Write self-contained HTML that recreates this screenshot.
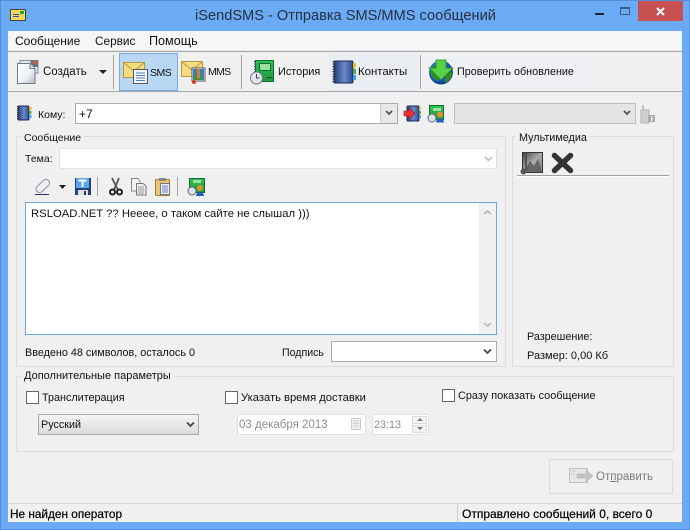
<!DOCTYPE html>
<html><head><meta charset="utf-8"><style>
*{box-sizing:border-box}
html,body{margin:0;padding:0;width:690px;height:530px;overflow:hidden}
body{position:relative;background:#6baaf5;font-family:"Liberation Sans",sans-serif;font-size:10.8px;color:#111}
.a{position:absolute}
.t{position:absolute;white-space:nowrap;line-height:14px}
.g{position:absolute;border:1px solid #dcdcdc}
.in{position:absolute;background:#fff;border:1px solid #e1e1e1}
.sep{position:absolute;width:1px;background:#a0a0a0}
svg{position:absolute;overflow:visible}
.chk{position:absolute;width:13px;height:13px;background:#fff;border:1px solid #666}
</style></head><body>
<svg style="left:0;top:0;width:0;height:0"><defs>
<linearGradient id="bk" x1="0" x2="1" y1="0" y2="0"><stop offset="0" stop-color="#24407e"/><stop offset=".55" stop-color="#6a88c8"/><stop offset="1" stop-color="#2c4a90"/></linearGradient>
<linearGradient id="pg" x1="0" x2="1" y1="0" y2="1"><stop offset="0" stop-color="#ffffff"/><stop offset=".55" stop-color="#f0f2f7"/><stop offset="1" stop-color="#b4bccc"/></linearGradient>
<radialGradient id="gl" cx=".4" cy=".35" r=".7"><stop offset="0" stop-color="#3c94e8"/><stop offset=".7" stop-color="#1a58b0"/><stop offset="1" stop-color="#0c2c70"/></radialGradient>
<linearGradient id="ph" x1="0" x2="1" y1="0" y2="1"><stop offset="0" stop-color="#444"/><stop offset=".5" stop-color="#aaa"/><stop offset="1" stop-color="#777"/></linearGradient>
<linearGradient id="gr" x1="0" x2="0" y1="0" y2="1"><stop offset="0" stop-color="#30c050"/><stop offset="1" stop-color="#1c9a40"/></linearGradient>
</defs></svg>
<div class="a" style="left:0;top:0;width:690px;height:530px;border:1px solid #4f8fdc"></div>
<svg style="left:10px;top:9px" width="16" height="12"><rect x=".5" y=".5" width="15" height="11" fill="#f0d858" stroke="#444"/><rect x="3" y="5" width="6" height="1" fill="#2050c0"/><rect x="3" y="7" width="6" height="1" fill="#2050c0"/><rect x="10" y="2" width="4" height="3" fill="#20a040"/></svg>
<div class="t" style="left:195px;top:6px;font-size:14.6px;line-height:20px;color:#26323f">iSendSMS - Отправка SMS/MMS сообщений</div>
<div class="a" style="left:595px;top:13px;width:9px;height:2px;background:#222"></div>
<div class="a" style="left:620px;top:7px;width:10px;height:8px;border:1px solid #3c5c84;border-top-width:2px"></div>
<div class="a" style="left:638px;top:1px;width:45px;height:20px;background:#c75050"></div>
<svg style="left:656px;top:7px" width="10" height="9"><path d="M1 1L8 8M8 1L1 8" stroke="#fff" stroke-width="2"/></svg>

<div class="a" style="left:8px;top:31px;width:674px;height:491px;background:#f0f0f0"></div>
<div class="a" style="left:8px;top:31px;width:674px;height:19px;background:#f5f6f8"></div>
<div class="a" style="left:8px;top:50px;width:674px;height:1px;background:#e8e8e8"></div>
<div class="a" style="left:8px;top:51px;width:674px;height:1px;background:#a6a6a6"></div>
<div class="a" style="left:8px;top:91px;width:674px;height:1px;background:#a6a6a6"></div>
<div class="t" style="left:15px;top:34px;font-size:12px;">Сообщение</div>
<div class="t" style="left:95px;top:34px;font-size:11.800px">Сервис</div>
<div class="t" style="left:149px;top:34px;font-size:12.600px">Помощь</div>

<svg style="left:16px;top:59px" width="24" height="25"><path d="M4 1.500H15L22 1.500V14H4Z" fill="#e2e6ee" stroke="#8a90a0"/><path d="M14.500 1H22V8H14.500Z" fill="#70747c"/><rect x="18" y="2" width="3" height="3" fill="#d86020"/><path d="M1.500 4.500H14L19 9.500V24.500H1.500Z" fill="url(#pg)" stroke="#70788a"/><path d="M14 4.500V9.500H19" fill="#d8dce4" stroke="#70788a"/></svg>
<div class="t" style="left:43px;top:65px;font-size:11.500px">Создать</div>
<svg style="left:99px;top:70px" width="9" height="5"><path d="M0 0H8L4 4Z" fill="#222"/></svg>
<div class="sep" style="left:113px;top:55px;height:34px"></div>

<div class="a" style="left:119px;top:53px;width:59px;height:38px;background:#b9d7f2;border:1px solid #76ade6"></div>
<svg style="left:123px;top:62px" width="26" height="22"><rect x=".5" y=".5" width="21" height="15" fill="#f4dc80" stroke="#b89838"/><path d="M1 1L11 9L21 1" fill="none" stroke="#b89838"/><rect x="10.500" y="7.500" width="14" height="14" fill="#f4f6fa" stroke="#556"/><path d="M13 11h9M13 13.500h9M13 16h9M13 18.500h9" stroke="#4a80c0"/></svg>
<div class="t" style="left:150px;top:66px;font-size:10.500px;letter-spacing:-.5px">SMS</div>
<svg style="left:181px;top:61px" width="25" height="24"><rect x=".5" y=".5" width="21" height="15" fill="#f4dc80" stroke="#b89838"/><path d="M1 1L11 9L21 1" fill="none" stroke="#b89838"/><rect x="11" y="7" width="13" height="13" fill="#fff" stroke="#556"/><rect x="12" y="8" width="11" height="11" fill="#3a80b8"/><path d="M12 19L16 12L23 19Z" fill="#4a9040"/><rect x="16" y="8" width="3" height="9" fill="#d88020"/><circle cx="13" cy="21" r="2" fill="#d84020"/></svg>
<div class="t" style="left:208px;top:65px;font-size:10.500px;letter-spacing:-.7px">MMS</div>
<div class="sep" style="left:241px;top:55px;height:34px"></div>

<svg style="left:250px;top:60px" width="26" height="25"><rect x="5.500" y=".5" width="18" height="21" fill="url(#gr)" stroke="#107030"/><rect x="9.500" y="3.500" width="11" height="7" fill="#9ce0a8" stroke="#107030"/><rect x="17" y="17" width="5" height="1" fill="#0c5020"/><path d="M5 1v12" stroke="#444" stroke-width="2" stroke-dasharray="1 1.500"/><circle cx="6.500" cy="18" r="6" fill="#e2e6ec" stroke="#778"/><path d="M6.500 14v4h3" fill="none" stroke="#445"/></svg>
<div class="t" style="left:278px;top:65px;font-size:10.900px">История</div>

<div class="a" style="left:329px;top:53px;width:89px;height:38px;background:#eaeef2"></div>
<svg style="left:331px;top:60px" width="26" height="25"><rect x="3" y="1" width="19" height="22" rx="1" fill="url(#bk)" stroke="#1c2c58"/><path d="M3 1v22" stroke="#333" stroke-width="3" stroke-dasharray="1 1.500"/><rect x="22" y="3" width="3" height="5" fill="#e8c020"/><rect x="22" y="9" width="3" height="5" fill="#50b040"/><rect x="22" y="15" width="3" height="5" fill="#40a0e0"/></svg>
<div class="t" style="left:358px;top:65px;font-size:11.400px">Контакты</div>
<div class="sep" style="left:420px;top:55px;height:34px"></div>

<div class="a" style="left:425px;top:53px;width:160px;height:38px;background:#eef0f3"></div>
<svg style="left:429px;top:60px" width="25" height="25"><circle cx="12" cy="12.500" r="12" fill="url(#gl)"/><path d="M1 12C3 6 6 4 9 3L12 14L9 21C5 20 2 16 1 12Z" fill="#2f8a30"/><path d="M16 17L20 11L24 13C23 18 20 22 16 23Z" fill="#2f8a30"/><path d="M7 0H17V8H24L12 20L0 8H7Z" fill="#58d048" stroke="#208020" stroke-width=".7"/></svg>
<div class="t" style="left:457px;top:65px;font-size:10.800px">Проверить обновление</div>

<svg style="left:17px;top:105px" width="15" height="16"><rect x="1" y="1" width="11" height="14" rx="1" fill="url(#bk)" stroke="#1c2c58"/><path d="M1 1v14" stroke="#333" stroke-width="2" stroke-dasharray="1 1"/><rect x="12" y="2" width="2.500" height="3" fill="#e8c020"/><rect x="12" y="6" width="2.500" height="3" fill="#50b040"/><rect x="12" y="10" width="2.500" height="3" fill="#40a0e0"/></svg>
<div class="t" style="left:38px;top:108px;font-size:10.500px">Кому:</div>
<div class="in" style="left:75px;top:103px;width:323px;height:21px;border-color:#ababab"></div>
<div class="t" style="left:79px;top:107px;font-size:12px">+7</div>
<div class="a" style="left:380px;top:104px;width:17px;height:19px;background:#e8e8e8;border-left:1px solid #ccc"></div>
<svg style="left:385px;top:111px" width="8" height="5"><path d="M1 0L4 3L7 0" fill="none" stroke="#555" stroke-width="1.800"/></svg>
<svg style="left:403px;top:105px" width="18" height="18"><rect x="4" y="1" width="12" height="15" rx="1" fill="url(#bk)" stroke="#1c2c58"/><rect x="16" y="2" width="2" height="3" fill="#e8c020"/><rect x="16" y="6" width="2" height="3" fill="#50b040"/><rect x="16" y="10" width="2" height="3" fill="#40a0e0"/><path d="M1 6H6V3L12 8.500L6 14V11H1Z" fill="#e83030" stroke="#a01818" stroke-width=".6"/></svg>
<svg style="left:427px;top:105px" width="18" height="18"><rect x="2.500" y=".5" width="14" height="14" fill="url(#gr)" stroke="#107030"/><rect x="6" y="3" width="8" height="3" fill="#a0e0a8"/><circle cx="5" cy="13" r="4" fill="#dde2e8" stroke="#667"/><circle cx="13" cy="9.500" r="3" fill="#e09030"/><path d="M9 17.500C9 12.500 17 12.500 17 17.500Z" fill="#2060c0"/></svg>
<div class="in" style="left:454px;top:103px;width:182px;height:21px;background:#e4e4e4;border-color:#bfbfbf"></div>
<svg style="left:623px;top:111px" width="8" height="5"><path d="M1 0L4 3L7 0" fill="none" stroke="#555" stroke-width="1.800"/></svg>
<svg style="left:640px;top:105px" width="16" height="18"><rect x="1" y="5" width="8" height="13" fill="#d0d0d0" stroke="#b4b4b4"/><rect x="2" y="0" width="2" height="5" fill="#c0c0c0"/><rect x="8" y="10" width="7" height="7" fill="#aaa"/><rect x="11" y="11" width="1.500" height="5" fill="#f0f0f0"/></svg>

<div class="g" style="left:16px;top:136px;width:490px;height:231px"></div>
<div class="t" style="left:21px;top:131px;background:#f0f0f0;padding:0 3px;font-size:10.500px">Сообщение</div>
<div class="t" style="left:25px;top:152px;font-size:10.500px">Тема:</div>
<div class="in" style="left:59px;top:148px;width:438px;height:21px"></div>
<svg style="left:484px;top:157px" width="9" height="5"><path d="M1 0L4.500 3.500L8 0" fill="none" stroke="#c4c4c4" stroke-width="1.800"/></svg>

<svg style="left:34px;top:178px" width="18" height="17"><path d="M5.500 11L12 5" stroke="#8a92a4" stroke-width="8" stroke-linecap="round"/><path d="M5.500 11L12 5" stroke="#eef0f6" stroke-width="6" stroke-linecap="round"/><path d="M1 16.500H15" stroke="#223070"/></svg>
<svg style="left:59px;top:185px" width="8" height="4"><path d="M0 0H7L3.500 4Z" fill="#222"/></svg>
<svg style="left:75px;top:178px" width="16" height="17"><rect width="16" height="17" fill="#24407e"/><rect x="1" y="0" width="13" height="10" fill="#5aa8e8"/><path d="M3.500 1.500H11.500V3.500H8.500V9H6.500V3.500H3.500Z" fill="#fff"/><rect x="3" y="12" width="10" height="5" fill="#e0e0e0"/><rect x="9" y="13" width="2" height="4" fill="#334"/></svg>
<div class="sep" style="left:97px;top:177px;height:19px;background:#a8a8a8"></div>
<svg style="left:109px;top:178px" width="14" height="18"><path d="M3 0L9 12M10 0L5 12" stroke="#555" stroke-width="1.800"/><circle cx="3.500" cy="14" r="2.500" fill="none" stroke="#222" stroke-width="2"/><circle cx="10.500" cy="14" r="2.500" fill="none" stroke="#222" stroke-width="2"/></svg>
<svg style="left:131px;top:178px" width="16" height="18"><path d="M.5 .5H7L9 3V13H.5Z" fill="#f4f4f4" stroke="#888"/><path d="M5.500 5.500H12L15 8V17H5.500Z" fill="#eee" stroke="#777"/><path d="M7 9h6M7 11h6M7 13h6M7 15h6" stroke="#999"/></svg>
<svg style="left:155px;top:178px" width="16" height="18"><rect x=".5" y="1.500" width="14" height="16" rx="1" fill="#ecc470" stroke="#a08030"/><rect x="4" y="0" width="7" height="3" fill="#888"/><rect x="5.500" y="5.500" width="9" height="11" fill="#eef" stroke="#778"/><path d="M7 8h6M7 10h6M7 12h6M7 14h6" stroke="#6a80c0"/></svg>
<div class="sep" style="left:177px;top:177px;height:19px;background:#a8a8a8"></div>
<svg style="left:187px;top:178px" width="18" height="18"><rect x="2.500" y=".5" width="15" height="14" fill="url(#gr)" stroke="#107030"/><rect x="6" y="2" width="8" height="3" fill="#a0e0a8"/><circle cx="5" cy="13" r="4" fill="#dde2e8" stroke="#667"/><circle cx="13" cy="10" r="3" fill="#e09030"/><path d="M9 18C9 13 17 13 17 18Z" fill="#2060c0"/></svg>

<div class="in" style="left:25px;top:202px;width:472px;height:133px;border-color:#6aa5e0"></div>
<div class="t" style="left:31px;top:207px;font-size:11.300px">RSLOAD.NET ?? Нееее, о таком сайте не слышал )))</div>
<div class="a" style="left:479px;top:203px;width:17px;height:131px;background:#f0f0f0"></div>
<svg style="left:483px;top:210px" width="9" height="5"><path d="M1 4L4.500 1L8 4" fill="none" stroke="#b8b8b8" stroke-width="1.800"/></svg>
<svg style="left:483px;top:322px" width="9" height="5"><path d="M1 1L4.500 4L8 1" fill="none" stroke="#b8b8b8" stroke-width="1.800"/></svg>
<div class="t" style="left:25px;top:346px">Введено 48 символов, осталось 0</div>
<div class="t" style="left:282px;top:346px;font-size:10.600px">Подпись</div>
<div class="in" style="left:331px;top:341px;width:166px;height:21px;border-color:#ababab"></div>
<svg style="left:483px;top:349px" width="9" height="6"><path d="M1 .5L4.500 4L8 .5" fill="none" stroke="#444" stroke-width="1.800"/></svg>

<div class="g" style="left:512px;top:136px;width:162px;height:231px"></div>
<div class="t" style="left:516px;top:131px;background:#f0f0f0;padding:0 3px">Мультимедиа</div>
<svg style="left:520px;top:151px" width="24" height="24"><rect x="2.500" y="1.500" width="20" height="20" fill="url(#ph)" stroke="#333"/><path d="M4 21L10 10L14 15L18 8L22 21Z" fill="#666"/><path d="M6 1V20" stroke="#444" stroke-width="1.500"/><circle cx="3.500" cy="20.500" r="3" fill="#555"/></svg>
<svg style="left:551px;top:152px" width="23" height="22"><path d="M3.500 3.500L19.500 18.500M19.500 3.500L3.500 18.500" stroke="#333" stroke-width="5.500" stroke-linecap="round"/></svg>
<div class="a" style="left:517px;top:175px;width:152px;height:1px;background:#a0a0a0"></div>
<div class="a" style="left:517px;top:176px;width:152px;height:1px;background:#fff"></div>
<div class="t" style="left:527px;top:330px">Разрешение:</div>
<div class="t" style="left:527px;top:349px;font-size:11px">Размер: 0,00 Кб</div>

<div class="g" style="left:16px;top:376px;width:658px;height:76px"></div>
<div class="t" style="left:21px;top:369px;background:#f0f0f0;padding:0 3px;font-size:11px">Дополнительные параметры</div>
<div class="chk" style="left:26px;top:391px"></div>
<div class="t" style="left:42px;top:391px;font-size:10.800px">Транслитерация</div>
<div class="chk" style="left:225px;top:391px"></div>
<div class="t" style="left:241px;top:391px;font-size:11.200px">Указать время доставки</div>
<div class="chk" style="left:442px;top:389px"></div>
<div class="t" style="left:458px;top:389px;font-size:10.900px">Сразу показать сообщение</div>
<div class="a" style="left:38px;top:414px;width:161px;height:21px;border:1px solid #a8a8a8;background:linear-gradient(#f4f4f4,#dcdcdc)"></div>
<div class="t" style="left:41px;top:418px;font-size:10.800px">Русский</div>
<svg style="left:186px;top:422px" width="9" height="6"><path d="M1 .5L4.500 4L8 .5" fill="none" stroke="#444" stroke-width="1.800"/></svg>
<div class="in" style="left:237px;top:414px;width:129px;height:21px"></div>
<div class="t" style="left:239px;top:418px;color:#8c8c8c;font-size:11.500px">03 декабря 2013</div>
<svg style="left:351px;top:418px" width="11" height="13"><rect x=".5" y=".5" width="9" height="11" fill="#eee" stroke="#ccc"/><path d="M2 3h6M2 5.500h6M2 8h6" stroke="#d0d0d0"/></svg>
<div class="in" style="left:372px;top:414px;width:57px;height:21px"></div>
<div class="t" style="left:374px;top:418px;color:#8c8c8c">23:13</div>
<div class="a" style="left:412px;top:416px;width:15px;height:8px;background:#f2f2f2;border:1px solid #ddd"></div>
<div class="a" style="left:412px;top:425px;width:15px;height:8px;background:#f2f2f2;border:1px solid #ddd"></div>
<svg style="left:417px;top:418px" width="6" height="13"><path d="M0 3L3 0L6 3Z M0 9H6L3 12Z" fill="#777"/></svg>

<div class="a" style="left:549px;top:459px;width:124px;height:35px;border:1px solid #dcdcdc"></div>
<svg style="left:569px;top:468px" width="25" height="16"><rect x=".5" y=".5" width="18" height="14" fill="#e8e8e8" stroke="#c0c0c0"/><path d="M2 3h5M2 6h3" stroke="#c4c4c4"/><path d="M8 6H17V2L24 8L17 14V10H8Z" fill="#c4c4c4" stroke="#aaa" stroke-width=".5"/></svg>
<div class="t" style="left:596px;top:470px;color:#7c7c7c;font-size:11.500px">От<span style="text-decoration:underline">п</span>равить</div>

<div class="a" style="left:8px;top:503px;width:674px;height:1px;background:#d8d8d8"></div>
<div class="a" style="left:457px;top:504px;width:1px;height:18px;background:#d0d0d0"></div>
<div class="t" style="left:10px;top:507px;font-size:11.800px;color:#000;-webkit-text-stroke:.2px #000">Не найден оператор</div>
<div class="t" style="left:462px;top:507px;font-size:12px;color:#000;-webkit-text-stroke:.2px #000">Отправлено сообщений 0, всего 0</div>
</body></html>
